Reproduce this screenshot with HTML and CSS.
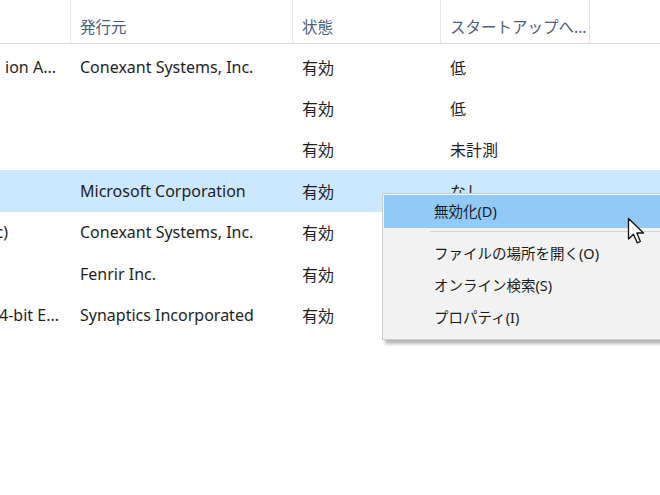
FILE: index.html
```html
<!DOCTYPE html>
<html lang="ja">
<head>
<meta charset="utf-8">
<link rel="stylesheet" href="styles.css">
</head>
<body>
<div class="view">
  <div class="header">
    <div class="hcell c1"></div>
    <div class="hcell c2">発行元</div>
    <div class="hcell c3">状態</div>
    <div class="hcell c4">スタートアップへ...</div>
    <div class="hcell c5"></div>
  </div>
  <div class="rows">
    <div class="row">
      <div class="cell c1 name">ion A...</div>
      <div class="cell c2">Conexant Systems, Inc.</div>
      <div class="cell c3">有効</div>
      <div class="cell c4">低</div>
    </div>
    <div class="row">
      <div class="cell c1 name"></div>
      <div class="cell c2"></div>
      <div class="cell c3">有効</div>
      <div class="cell c4">低</div>
    </div>
    <div class="row">
      <div class="cell c1 name"></div>
      <div class="cell c2"></div>
      <div class="cell c3">有効</div>
      <div class="cell c4">未計測</div>
    </div>
    <div class="row selected">
      <div class="cell c1 name"></div>
      <div class="cell c2">Microsoft Corporation</div>
      <div class="cell c3">有効</div>
      <div class="cell c4">なし</div>
    </div>
    <div class="row">
      <div class="cell c1 name short">c)</div>
      <div class="cell c2">Conexant Systems, Inc.</div>
      <div class="cell c3">有効</div>
      <div class="cell c4"></div>
    </div>
    <div class="row">
      <div class="cell c1 name"></div>
      <div class="cell c2">Fenrir Inc.</div>
      <div class="cell c3">有効</div>
      <div class="cell c4"></div>
    </div>
    <div class="row">
      <div class="cell c1 name wide">4-bit E...</div>
      <div class="cell c2">Synaptics Incorporated</div>
      <div class="cell c3">有効</div>
      <div class="cell c4"></div>
    </div>
  </div>

  <div class="menu">
    <div class="item hover">無効化(D)</div>
    <div class="sep"></div>
    <div class="item">ファイルの場所を開く(O)</div>
    <div class="item">オンライン検索(S)</div>
    <div class="item">プロパティ(I)</div>
  </div>

  <svg class="cursor" width="19" height="28" viewBox="0 0 19 28">
    <path d="M1.5 1.5 L1.5 22 L6.5 17.2 L10.2 25.8 L13.4 24.4 L9.8 16 L16.5 16 Z" fill="#fff" stroke="#111" stroke-width="1.3" stroke-linejoin="round"/>
  </svg>
</div>
</body>
</html>
```

FILE: styles.css
```css
* { box-sizing: border-box; }
html, body { margin: 0; padding: 0; background: #fff; }
body {
  width: 660px;
  height: 495px;
  overflow: hidden;
  font-family: "Noto Sans", "Noto Sans CJK JP", sans-serif;
  color: #1e1e1e;
}
.view {
  position: relative;
  width: 660px;
  height: 495px;
  overflow: hidden;
}
.header {
  display: flex;
  height: 44px;
  border-bottom: 1px solid #d9d9d9;
}
.hcell {
  display: flex;
  align-items: center;
  padding: 10px 0 0 9px;
  font-size: 15.5px;
  color: #4c607a;
  border-right: 1px solid #e5e5e5;
}
.c1 { width: 71px; flex: none; }
.c2 { width: 222px; flex: none; }
.c3 { width: 148px; flex: none; }
.c4 { width: 149px; flex: none; }
.c5 { flex: 1; border-right: none; }

.rows {
  display: flex;
  flex-direction: column;
  padding-top: 2px;
}
.row {
  display: flex;
  height: 41.4px;
  align-items: center;
}
.row.selected { background: #cce8ff; }
.cell {
  padding-left: 9px;
  font-size: 16px;
  white-space: nowrap;
  overflow: hidden;
}
.name {
  display: flex;
  justify-content: flex-end;
  padding-left: 0;
  padding-right: 15px;
}
.name.short { padding-right: 63px; }
.name.wide { padding-right: 12px; }

.menu {
  position: absolute;
  left: 382px;
  top: 193px;
  width: 300px;
  height: 147px;
  background: #f2f2f2;
  border: 1px solid #cccccc;
  box-shadow: 3px 4px 3px rgba(0,0,0,0.28);
  padding: 1px 0 0 1px;
  display: flex;
  flex-direction: column;
  font-size: 14.5px;
  color: #1a1a1a;
}
.item {
  height: 32px;
  display: flex;
  align-items: center;
  padding-left: 50px;
  padding-bottom: 2px;
  white-space: nowrap;
}
.item.hover {
  background: #91c9f7;
  height: 33px;
}
.sep {
  height: 1px;
  background: #d2d2d2;
  margin: 3px 0 5px 46px;
}
.cursor {
  position: absolute;
  left: 627px;
  top: 217px;
}
```
